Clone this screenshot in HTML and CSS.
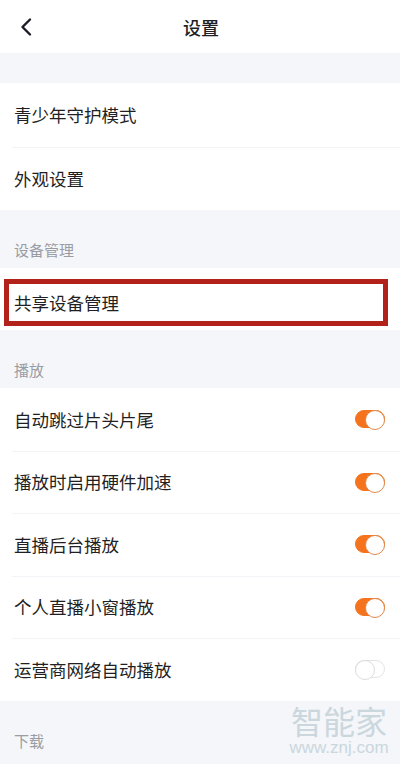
FILE: index.html
```html
<!DOCTYPE html>
<html lang="zh-CN">

<head>
    <meta charset="UTF-8">
    <meta name="viewport" content="width=device-width, initial-scale=1.0">
    <title>设置</title>
    <link rel="stylesheet" href="styles.css">
</head>

<body>
    <div class="page">
        <div class="header">
            <svg class="back" width="14" height="20" viewBox="0 0 14 20">
                <polyline points="11,2.5 3.5,10 11,17.5" fill="none" stroke="#1c1c28" stroke-width="2.4"
                    stroke-linecap="round" stroke-linejoin="round" />
            </svg>
            <div class="title">设置</div>
        </div>

        <div class="gap"></div>

        <div class="group group-top">
            <div class="row">青少年守护模式</div>
            <div class="row">外观设置</div>
        </div>

        <div class="section">设备管理</div>

        <div class="group">
            <div class="row row-marked">
                <div class="highlight">共享设备管理</div>
            </div>
        </div>

        <div class="section">播放</div>

        <div class="group">
            <div class="row switch-row">
                <span>自动跳过片头片尾</span>
                <span class="switch on"></span>
            </div>
            <div class="row switch-row">
                <span>播放时启用硬件加速</span>
                <span class="switch on"></span>
            </div>
            <div class="row switch-row">
                <span>直播后台播放</span>
                <span class="switch on"></span>
            </div>
            <div class="row switch-row">
                <span>个人直播小窗播放</span>
                <span class="switch on"></span>
            </div>
            <div class="row switch-row">
                <span>运营商网络自动播放</span>
                <span class="switch"></span>
            </div>
        </div>

        <div class="section">下载</div>

        <div class="watermark">
            <div class="wm-name">智能家</div>
            <div class="wm-url">www.znj.com</div>
        </div>
    </div>
</body>

</html>
```

FILE: styles.css
```css
* {
    box-sizing: border-box;
}

body {
    margin: 0;
    background-color: #f4f6fa;
    font-family: "Noto Sans CJK SC", "Noto Sans", sans-serif;
    color: #1f1f24;
}

.page {
    position: relative;
    width: 400px;
    height: 764px;
    overflow: hidden;
}

.header {
    height: 53px;
    background-color: white;
    display: flex;
    align-items: center;
    padding-left: 19px;
}

.back {
    display: block;
}

.title {
    flex: 1;
    text-align: center;
    font-size: 18px;
    font-weight: 500;
    margin-right: 31px;
    margin-top: 1px;
}

.gap {
    height: 30px;
}

.group {
    background-color: white;
}

.row {
    height: 62.5px;
    display: flex;
    align-items: center;
    padding: 0 14px;
    font-size: 17.5px;
    position: relative;
}

.group-top .row {
    height: 63.5px;
}

/* hairline between rows */
.row + .row::before {
    content: "";
    position: absolute;
    top: 0;
    left: 12px;
    right: 0;
    height: 1px;
    background-color: #f3f4f7;
}

.section {
    height: 58px;
    display: flex;
    align-items: flex-end;
    padding: 0 14px 8px;
    font-size: 15px;
    color: #9a9ca3;
}

.row-marked {
    height: 62px;
    padding: 11px 12px 4px 4px;
    align-items: stretch;
}

.highlight {
    flex: 1;
    display: flex;
    align-items: center;
    border: 5px solid #b3221a;
    padding-left: 5px;
}

.switch-row {
    justify-content: space-between;
    padding-right: 15px;
}

.switch {
    width: 30px;
    height: 18px;
    border-radius: 9px;
    border: 1px solid #e4e4e8;
    background-color: white;
    position: relative;
}

.switch::after {
    content: "";
    position: absolute;
    top: -1px;
    left: -1px;
    width: 18px;
    height: 18px;
    border-radius: 50%;
    background-color: white;
    border: 1px solid #dcdce0;
}

.switch.on {
    background-color: #f4731c;
    border-color: #f4731c;
}

.switch.on::after {
    left: auto;
    right: -1px;
    border-color: #e08a4c;
}

.watermark {
    position: absolute;
    right: 11px;
    bottom: 8px;
    width: 100px;
    text-align: center;
    color: #c6d4da;
    opacity: 0.9;
}

.wm-name {
    font-size: 32px;
    line-height: 34px;
}

.wm-url {
    margin-top: 2px;
    font-family: "Liberation Sans", sans-serif;
    font-size: 17px;
    line-height: 17px;
}
```
